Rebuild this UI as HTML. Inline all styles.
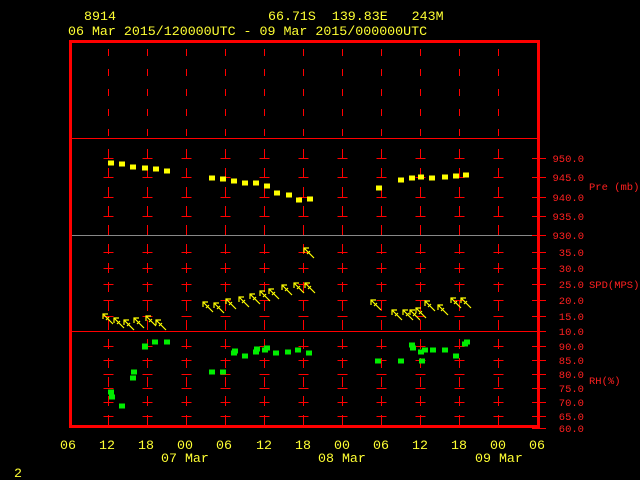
<!DOCTYPE html>
<html><head><style>
html,body{margin:0;padding:0;background:#000;width:640px;height:480px;overflow:hidden}
svg{display:block}
text{white-space:pre}
.y{fill:#ffff33;font-family:"Liberation Mono",monospace;font-size:13.3px}
.r{fill:#ff2020;font-family:"Liberation Mono",monospace;font-size:10.5px}
</style></head><body>
<svg width="640" height="480" viewBox="0 0 640 480" xmlns="http://www.w3.org/2000/svg" xml:space="preserve">
<rect width="640" height="480" fill="#000"/>
<text class="y" x="84" y="20">8914</text>
<text class="y" x="268" y="20">66.71S  139.83E   243M</text>
<text class="y" x="68" y="35">06 Mar 2015/120000UTC - 09 Mar 2015/000000UTC</text>
<g id="grid" stroke="#ff0000" stroke-width="1">
<g stroke-dasharray="7 13">
<line x1="108.5" y1="49" x2="108.5" y2="138"/><line x1="147.5" y1="49" x2="147.5" y2="138"/><line x1="186.5" y1="49" x2="186.5" y2="138"/><line x1="225.5" y1="49" x2="225.5" y2="138"/><line x1="264.5" y1="49" x2="264.5" y2="138"/><line x1="303.5" y1="49" x2="303.5" y2="138"/><line x1="342.5" y1="49" x2="342.5" y2="138"/><line x1="381.5" y1="49" x2="381.5" y2="138"/><line x1="420.5" y1="49" x2="420.5" y2="138"/><line x1="459.5" y1="49" x2="459.5" y2="138"/><line x1="498.5" y1="49" x2="498.5" y2="138"/>
</g>
<g stroke-dasharray="10 9">
<line x1="108.5" y1="149" x2="108.5" y2="426"/><line x1="147.5" y1="149" x2="147.5" y2="426"/><line x1="186.5" y1="149" x2="186.5" y2="426"/><line x1="225.5" y1="149" x2="225.5" y2="426"/><line x1="264.5" y1="149" x2="264.5" y2="426"/><line x1="303.5" y1="149" x2="303.5" y2="426"/><line x1="342.5" y1="149" x2="342.5" y2="426"/><line x1="381.5" y1="149" x2="381.5" y2="426"/><line x1="420.5" y1="149" x2="420.5" y2="426"/><line x1="459.5" y1="149" x2="459.5" y2="426"/><line x1="498.5" y1="149" x2="498.5" y2="426"/>
</g>
<line x1="70" y1="138.5" x2="540" y2="138.5"/>
<line x1="70" y1="331.5" x2="540" y2="331.5"/>
<line x1="70" y1="235.5" x2="540" y2="235.5" stroke="#888"/>
</g>
<g id="ticks" stroke="#ff0000"></g>
<rect x="70.5" y="41.5" width="468" height="385" fill="none" stroke="#ff0000" stroke-width="3"/>
<g id="labels"></g>
<text class="r" x="589" y="190">Pre (mb)</text>
<text class="r" x="589" y="288">SPD(MPS)</text>
<text class="r" x="589" y="384">RH(%)</text>
<g class="y">
<text x="60" y="449">06</text><text x="99" y="449">12</text><text x="138" y="449">18</text><text x="177" y="449">00</text><text x="216" y="449">06</text><text x="256" y="449">12</text><text x="295" y="449">18</text><text x="334" y="449">00</text><text x="373" y="449">06</text><text x="412" y="449">12</text><text x="451" y="449">18</text><text x="490" y="449">00</text><text x="529" y="449">06</text>
<text x="161" y="462">07 Mar</text><text x="318" y="462">08 Mar</text><text x="475" y="462">09 Mar</text>
<text x="14" y="477">2</text>
</g>
<g id="pre" fill="#ffff00"></g>
<g id="rh" fill="#00ee00"></g>
<g id="wind" stroke="#ffff00" stroke-width="1.2" fill="none"></g>
<script>
var NS="http://www.w3.org/2000/svg";
function el(p,t,a){var e=document.createElementNS(NS,t);for(var k in a)e.setAttribute(k,a[k]);document.getElementById(p).appendChild(e);return e;}
var xs=[108.5,147.5,186.5,225.5,264.5,303.5,342.5,381.5,420.5,459.5,498.5];
var ty=[158,177,197,216,252,268,284,300,316,346,360,374,388,402,416];
ty.forEach(function(y){xs.forEach(function(x){el("ticks","line",{x1:x-5,x2:x+5,y1:y+.5,y2:y+.5});});el("ticks","line",{x1:532,x2:546,y1:y+.5,y2:y+.5});});
[235,331,428].forEach(function(y){el("ticks","line",{x1:532,x2:546,y1:y+.5,y2:y+.5});});
var L=[["950.0",158],["945.0",177],["940.0",197],["935.0",216],["930.0",235],["35.0",252],["30.0",268],["25.0",284],["20.0",300],["15.0",316],["10.0",331],["90.0",346],["85.0",360],["80.0",374],["75.0",388],["70.0",402],["65.0",416],["60.0",428]];
L.forEach(function(l){var t=el("labels","text",{x:584,y:l[1]+4,"class":"r","text-anchor":"end"});t.textContent=l[0];});
var P=[[111,163],[122,164],[133,167],[145,168],[156,169],[167,171],[212,178],[223,179],[234,181],[245,183],[256,183],[267,186],[277,193],[289,195],[299,200],[310,199],[379,188],[401,180],[412,178],[421,177],[432,178],[445,177],[456,176],[466,175]];
P.forEach(function(p){el("pre","rect",{x:p[0]-3,y:p[1]-2.5,width:6,height:5});});
var G=[[111,392],[112,397],[122,406],[134,372],[133,378],[145,346],[145,347],[155,342],[167,342],[212,372],[223,372],[234,353],[235,351],[245,356],[256,352],[257,349],[265,350],[267,348],[276,353],[288,352],[298,350],[309,353],[378,361],[401,361],[412,345],[413,348],[421,352],[422,361],[425,350],[433,350],[445,350],[456,356],[465,344],[467,342]];
G.forEach(function(p){el("rh","rect",{x:p[0]-3,y:p[1]-2.5,width:6,height:5});});
var W=[[103,314],[114,318],[124,320],[134,318],[146,316],[156,320],[203,302],[214,303],[226,299],[239,297],[250,294],[260,291],[269,289],[282,285],[294,283],[305,283],[304,248],[371,300],[392,310],[403,310],[410,310],[416,308],[425,301],[438,305],[451,298],[461,298]];
W.forEach(function(w){var x=w[0],y=w[1];el("wind","path",{d:"M"+(x+10)+" "+(y+10)+"L"+x+" "+y+"M"+x+" "+(y+5)+"L"+x+" "+y+"L"+(x+5)+" "+y+"M"+(x+3)+" "+(y+6)+"L"+(x+6)+" "+(y+3)});});
</script>
</svg>
</body></html>
